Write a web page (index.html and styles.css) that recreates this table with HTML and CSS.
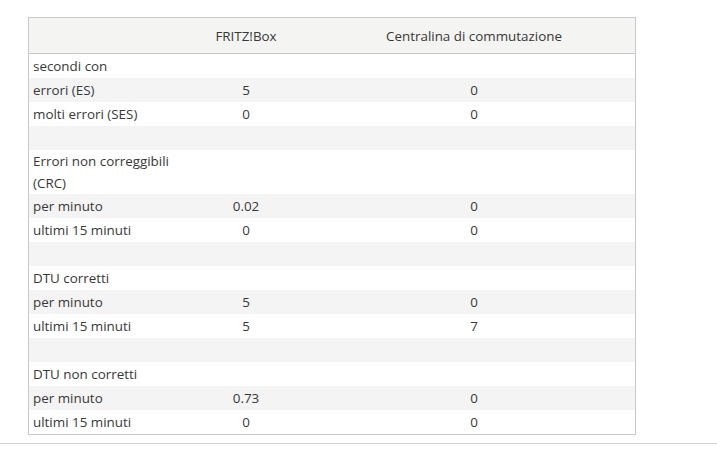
FILE: index.html
```html
<!DOCTYPE html>
<html lang="it">
<head>
<meta charset="utf-8">
<link rel="stylesheet" href="styles.css">
</head>
<body>
<div class="page">
  <table class="stats">
    <thead>
      <tr><th class="c1"></th><th class="c2">FRITZ!Box</th><th class="c3">Centralina di commutazione</th></tr>
    </thead>
    <tbody>
      <tr><td>secondi con</td><td></td><td></td></tr>
      <tr class="alt"><td>errori (ES)</td><td>5</td><td>0</td></tr>
      <tr><td>molti errori (SES)</td><td>0</td><td>0</td></tr>
      <tr class="alt"><td>&nbsp;</td><td></td><td></td></tr>
      <tr><td>Errori non correggibili (CRC)</td><td></td><td></td></tr>
      <tr class="alt"><td>per minuto</td><td>0.02</td><td>0</td></tr>
      <tr><td>ultimi 15 minuti</td><td>0</td><td>0</td></tr>
      <tr class="alt"><td>&nbsp;</td><td></td><td></td></tr>
      <tr><td>DTU corretti</td><td></td><td></td></tr>
      <tr class="alt"><td>per minuto</td><td>5</td><td>0</td></tr>
      <tr><td>ultimi 15 minuti</td><td>5</td><td>7</td></tr>
      <tr class="alt"><td>&nbsp;</td><td></td><td></td></tr>
      <tr><td>DTU non corretti</td><td></td><td></td></tr>
      <tr class="alt"><td>per minuto</td><td>0.73</td><td>0</td></tr>
      <tr><td>ultimi 15 minuti</td><td>0</td><td>0</td></tr>
    </tbody>
  </table>
  <div class="rule"></div>
</div>
</body>
</html>
```
FILE: styles.css
```css
html, body {
  margin: 0;
  padding: 0;
  background: #fff;
}
body {
  font-family: "Open Sans", "Noto Sans", sans-serif;
  font-size: 13.4px;
  color: #383838;
}
.page {
  padding-top: 17px;
}
.stats {
  margin-left: 28px;
  width: 608px;
  border-collapse: collapse;
  border: 1px solid #c8c8c8;
  table-layout: fixed;
}
.stats th {
  font-weight: normal;
  background: #f4f4f2;
  height: 35px;
  padding: 0 4px;
  border-bottom: 1px solid #c8c8c8;
  text-align: center;
  line-height: 22px;
}
.stats .c1 { width: 142px; }
.stats .c2 { width: 126px; }
.stats td {
  padding: 0 4px;
  line-height: 22px;
  height: 24px;
  text-align: center;
  vertical-align: middle;
}
.stats td:first-child {
  text-align: left;
}
.stats tr.alt td {
  background: #f4f4f4;
}
.rule {
  margin-top: 8px;
  height: 1px;
  background: #d4d4d4;
}
```
